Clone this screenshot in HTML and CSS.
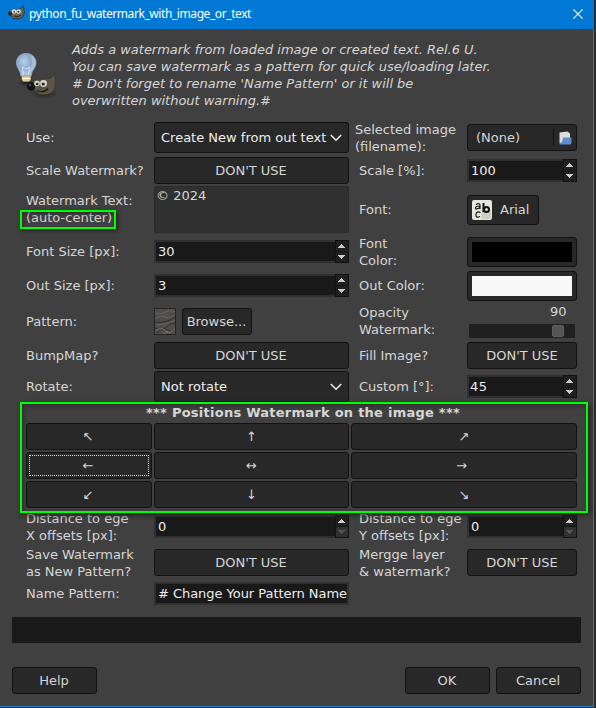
FILE: index.html
```html
<!DOCTYPE html>
<html lang="en">
<head>
<meta charset="utf-8">
<title>python_fu_watermark_with_image_or_text</title>
<link rel="stylesheet" href="styles.css">
</head>
<body>
<svg class="defs" width="0" height="0">
  <symbol id="up" viewBox="0 0 7 4"><path d="M3 0h1v1h1v1h1v1h1v1H0V3h1V2h1V1h1z"/></symbol>
  <symbol id="down" viewBox="0 0 7 4"><path d="M0 0h7v1H6v1H5v1H4v1H3V3H2V2H1V1H0z"/></symbol>
  <symbol id="chev" viewBox="0 0 12 8"><path d="M.8 1l5.2 5.2L11.2 1" fill="none" stroke="#eee" stroke-width="1.6"/></symbol>
</svg>
<div class="window">
  <header class="titlebar">
    <svg class="app-icon" viewBox="0 0 17 15">
      <path d="M5 4l3 0 4-1 3.500-3 .8 7-1.800 4-4 2.200-5-.7-2.500-3z" fill="#6b6355" stroke="#2b2926" stroke-width=".8"/>
      <ellipse cx="2" cy="7.500" rx="2" ry="1.900" fill="#252525"/>
      <circle cx="6" cy="5.500" r="2.200" fill="#eee"/><circle cx="10.500" cy="5.500" r="2.300" fill="#eee"/>
      <circle cx="6.200" cy="5.800" r=".9" fill="#222"/><circle cx="10.500" cy="5.800" r="1" fill="#222"/>
      <path d="M6 10q4 2 7-1" stroke="#222" fill="none"/>
    </svg>
    <span class="title">python_fu_watermark_with_image_or_text</span>
    <svg class="close" viewBox="0 0 10 10"><path d="M.4.4l9.2 9.2M9.6.4L.4 9.6" stroke="#fff" stroke-width="1.1"/></svg>
  </header>

  <section class="intro">
    <svg class="intro-icon" viewBox="0 0 46 50">
      <defs>
        <radialGradient id="glass" cx=".4" cy=".35"><stop offset="0" stop-color="#bcd1eb"/><stop offset=".7" stop-color="#8aa8cd"/><stop offset="1" stop-color="#a9c3de"/></radialGradient>
        <radialGradient id="shade"><stop offset="0" stop-color="#111" stop-opacity=".8"/><stop offset="1" stop-color="#222" stop-opacity="0"/></radialGradient>
      </defs>
      <ellipse cx="30" cy="40" rx="14" ry="6" fill="url(#shade)"/>
      <ellipse cx="12" cy="30" rx="9" ry="4" fill="url(#shade)"/>
      <path d="M19 27l6-1h6l6-1 4-4.500.5 9-1 7-4 4-6 1.500-5-.5-5-4z" fill="#5c5544" stroke="#3b372e" stroke-width=".8"/>
      <circle cx="17" cy="33.500" r="4.200" fill="#101114"/><circle cx="16" cy="32" r="1.200" fill="#53565d"/>
      <circle cx="23" cy="30.500" r="2.800" fill="#d8d6cf"/><circle cx="29.500" cy="30.500" r="3.400" fill="#d8d6cf"/>
      <circle cx="23.200" cy="31" r="1.300" fill="#222"/><circle cx="29.200" cy="31" r="1.600" fill="#222"/>
      <path d="M23 37.500q7 3 11-2" stroke="#1d1b18" stroke-width="1.300" fill="none"/>
      <path d="M12 .5C6 .5 2.500 4.500 2.500 10c0 5 4 7 4.500 13h10c.5-6 5-8 5-13C22 4.500 18 .5 12 .5z" fill="url(#glass)" stroke="#8ba4bd"/>
      <path d="M9.500 22l-1-8 3.500 2 3.500-2-1 8" stroke="#d3e0ec" stroke-width="1" fill="none"/>
      <path d="M8 23h8.500v4L15 28.500H9.500L8 27z" fill="#d9cf9b" stroke="#a79e72" stroke-width=".6"/><path d="M8 25.500h8.500" stroke="#fbf6d5"/>
    </svg>
    <p class="intro-text">Adds a watermark from loaded image or created text. Rel.6 U.<br>You can save watermark as a pattern for quick use/loading later.<br># Don't forget to rename 'Name Pattern' or it will be<br>overwritten without warning.#</p>
  </section>

  <main class="form">
    <div class="row row-use">
      <label class="label">Use:</label>
      <div class="main"><div class="btn select">Create New from out text<svg class="chev"><use href="#chev"/></svg></div></div>
      <label class="label side-label nudged">Selected image<br>(filename):</label>
      <div class="side"><div class="btn file"><span class="file-name">(None)</span>
        <svg class="file-icon" viewBox="0 0 13 14"><path d="M.5 1.500L8.500.5l2.500 2V12H.5z" fill="#dedede"/><path d="M0 12l3-1 1-4.500h8.500L12.500 12l-1 1.500H1z" fill="#5b8fc9"/></svg></div></div>
    </div>
    <div class="row row-scale">
      <label class="label">Scale Watermark?</label>
      <div class="main"><div class="btn wide">DON'T USE</div></div>
      <label class="label side-label">Scale [%]:</label>
      <div class="side"><div class="spin"><span class="value">100</span><span class="steps"><i><svg><use href="#up"/></svg></i><i><svg><use href="#down"/></svg></i></span></div></div>
    </div>
    <div class="row row-text">
      <label class="label raised">Watermark Text:<br><span class="marked">(auto-center)</span></label>
      <div class="main"><div class="textarea">© 2024</div></div>
      <label class="label side-label">Font:</label>
      <div class="side"><div class="btn font"><svg class="font-icon" viewBox="0 0 20 20"><rect width="20" height="20" rx="2" fill="#e6e6dc"/><path d="M9.500 10H19v9H9.500z" fill="#cfcfbd"/><g fill="none" stroke="#111"><path d="M4 4.500q4-2 4 1V9M8 6Q3.500 6 3.500 8T8 7.500" stroke-width="1.200"/><path d="M11.500 3v9" stroke-width="2"/><circle cx="14.500" cy="9.500" r="2.500" stroke-width="2"/><path d="M8.500 12.500q-4-2-4.500 2t4 2" stroke-width="1.200"/></g></svg>Arial</div></div>
    </div>
    <div class="row row-fontsize">
      <label class="label raised">Font Size [px]:</label>
      <div class="main raised"><div class="spin"><span class="value">30</span><span class="steps"><i><svg><use href="#up"/></svg></i><i><svg><use href="#down"/></svg></i></span></div></div>
      <label class="label side-label">Font<br>Color:</label>
      <div class="side"><div class="btn color"><span class="swatch black"></span></div></div>
    </div>
    <div class="row row-outsize">
      <label class="label raised">Out Size [px]:</label>
      <div class="main raised"><div class="spin"><span class="value">3</span><span class="steps"><i><svg><use href="#up"/></svg></i><i><svg><use href="#down"/></svg></i></span></div></div>
      <label class="label side-label raised">Out Color:</label>
      <div class="side"><div class="btn color"><span class="swatch white"></span></div></div>
    </div>
    <div class="row row-pattern">
      <label class="label">Pattern:</label>
      <div class="main pattern">
        <svg class="pattern-thumb" viewBox="0 0 22 27"><path fill="#504d4d" d="M0 0h22v27H0z"/><g fill="none"><path d="M0 5q6 2 11-1t11 0M0 11q7-4 11-2t11-3M3 17q10 0 19-5" stroke="#666363"/><path d="M0 14q10 2 22-5M1 20q8 3 13-2t8-1M3 25q7-6 11-3t8-1" stroke="#2f2c2c"/><path d="M2 22q7-3 10 1t10-3M9 26l5-2" stroke="#7d7673"/></g><path d="M.5.500h21v26H.5z" fill="none" stroke="#242424"/></svg>
        <div class="btn browse">Browse...</div>
      </div>
      <label class="label side-label">Opacity<br>Watermark:</label>
      <div class="side opacity"><span class="opacity-value">90</span><div class="track"><span class="thumb"></span></div></div>
    </div>
    <div class="row row-bump">
      <label class="label">BumpMap?</label>
      <div class="main"><div class="btn wide">DON'T USE</div></div>
      <label class="label side-label">Fill Image?</label>
      <div class="side"><div class="btn">DON'T USE</div></div>
    </div>
    <div class="row row-rotate">
      <label class="label">Rotate:</label>
      <div class="main"><div class="btn select">Not rotate<svg class="chev"><use href="#chev"/></svg></div></div>
      <label class="label side-label">Custom [°]:</label>
      <div class="side"><div class="spin"><span class="value tight">45</span><span class="steps"><i><svg><use href="#up"/></svg></i><i><svg><use href="#down"/></svg></i></span></div></div>
    </div>

    <section class="positions">
      <h2 class="positions-title">*** Positions Watermark on the image ***</h2>
      <div class="pad">
        <div class="btn">↖</div><div class="btn">↑</div><div class="btn">↗</div>
        <div class="btn focused">←</div><div class="btn">↔</div><div class="btn shifted">→</div>
        <div class="btn">↙</div><div class="btn">↓</div><div class="btn">↘</div>
      </div>
    </section>

    <div class="row row-distance">
      <label class="label">Distance to ege<br>X offsets [px]:</label>
      <div class="main raised"><div class="spin"><span class="value">0</span><span class="steps"><i><svg><use href="#up"/></svg></i><i class="off"><svg><use href="#down"/></svg></i></span></div></div>
      <label class="label side-label">Distance to ege<br>Y offsets [px]:</label>
      <div class="side raised"><div class="spin"><span class="value">0</span><span class="steps"><i><svg><use href="#up"/></svg></i><i class="off"><svg><use href="#down"/></svg></i></span></div></div>
    </div>
    <div class="row row-save">
      <label class="label">Save Watermark<br>as New Pattern?</label>
      <div class="main raised"><div class="btn wide">DON'T USE</div></div>
      <label class="label side-label">Mergge layer<br>&amp; watermark?</label>
      <div class="side raised"><div class="btn">DON'T USE</div></div>
    </div>
    <div class="row row-name">
      <label class="label">Name Pattern:</label>
      <div class="main"><div class="spin entry"><span class="value">#&nbsp;Change Your Pattern Name</span></div></div>
    </div>
  </main>

  <div class="progress"></div>
  <footer class="actions">
    <div class="btn">Help</div><div class="btn ok">OK</div><div class="btn">Cancel</div>
  </footer>
</div>
</body>
</html>
```
FILE: styles.css
```css
*, *::after { box-sizing: border-box; }
body {
  margin: 0;
  height: 708px;
  overflow: hidden;
  background: #2b2b2b;
  color: #d6d6d6;
  font: 13px/17px "DejaVu Sans", sans-serif;
  white-space: nowrap;
}
.defs { position: absolute; }
.window {
  width: 594px;
  height: 707px;
  background: #404040;
  border-right: 1px solid #1a80cf;
  border-bottom: 1px solid #1a80cf;
}
.titlebar {
  display: flex;
  align-items: center;
  width: 594px;
  height: 29px;
  padding: 0 11px 2px 8px;
  background: #0078d4;
  color: #fff;
  font: 12px/16px "Noto Sans", sans-serif;
}
.app-icon { width: 17px; height: 15px; margin: 0 4px 1px 0; }
.title { flex: 1; letter-spacing: -0.42px; }
.close { width: 10px; height: 10px; }

.intro { display: flex; height: 93px; padding: 12px 0 0 14px; }
.intro-icon { width: 46px; height: 50px; margin: 12px 12px 0 0; }
.intro-text { margin: 0; font-style: italic; letter-spacing: -0.02px; }

.form { padding-left: 26px; }
.row { display: flex; align-items: center; width: 551px; }
.label { width: 128px; }
.main { width: 195px; }
.side-label { width: 118px; padding-left: 10px; }
.side-label.nudged { padding-left: 6px; }
.side { width: 110px; }
.raised { padding-bottom: 1px; }
.row-use { height: 31px; }
.row-scale { height: 27px; margin-top: 4px; }
.row-text { height: 47px; margin-top: 2px; }
.row-fontsize { height: 30px; margin-top: 4px; }
.row-outsize { height: 30px; margin-top: 4px; }
.row-pattern { height: 34px; margin-top: 3px; }
.row-bump { height: 27px; margin-top: 4px; }
.row-rotate { height: 31px; margin-top: 2px; }
.row-distance { height: 34px; }
.row-save { height: 34px; margin-top: 2px; }
.row-name { height: 23px; margin-top: 2px; }

.btn {
  display: flex;
  align-items: center;
  justify-content: center;
  height: 27px;
  background: #282828;
  border: 1px solid #111;
  border-radius: 3px;
}
.wide { padding-right: 1px; }
.select { height: 31px; justify-content: space-between; padding: 0 6px; color: #eee; }
.chev { flex: none; width: 12px; height: 8px; }
.file { justify-content: space-between; padding: 0 4px 0 8px; }
.file-name { width: 78px; line-height: 17px; border-right: 1px solid #111; }
.file-icon { width: 13px; height: 14px; }
.font { width: 72px; height: 30px; justify-content: flex-start; padding-left: 4px; }
.font-icon { width: 20px; height: 20px; margin-right: 8px; }
.color { height: 30px; }
.swatch { width: 100px; height: 20px; }
.black { background: #000; }
.white { background: #f8f8f8; }

.spin {
  display: flex;
  height: 23px;
  background: #191919;
  border: 2px solid #303030;
  border-right: 0;
  color: #eee;
}
.value { flex: 1; padding-left: 2px; line-height: 19px; }
.value.tight { padding-left: 1px; letter-spacing: 0.4px; }
.steps { width: 14px; height: 23px; margin-top: -2px; border: 1px solid #111; background: #202020; }
.steps i { display: flex; align-items: center; height: 10px; padding-left: 2px; }
.steps i + i { height: 11px; border-top: 1px solid #141414; }
.steps svg { width: 7px; height: 4px; fill: #ccc; }
.steps .off { background: #303030; }
.steps .off svg { fill: #555; }
.entry { border-right: 2px solid #303030; }
.entry .value { letter-spacing: -0.04px; }
.textarea {
  height: 47px;
  padding: 0 1px;
  line-height: 18px;
  background: #303030;
  border: 1px solid #2a2a2a;
  border-radius: 2px;
}
.marked { position: relative; }
.marked::after {
  content: "";
  position: absolute;
  left: -6px;
  top: 0;
  width: 96px;
  height: 19px;
  border: 2px solid #0f0;
  box-shadow: 2px 2px 4px #222, inset 2px 2px 4px #2228;
}
.pattern { display: flex; gap: 6px; }
.pattern-thumb { width: 22px; height: 27px; }
.browse { width: 70px; padding-right: 1px; }
.opacity { height: 34px; padding: 0 2px; }
.opacity-value { display: block; padding-left: 81px; line-height: 16px; }
.track { height: 14px; margin-top: 4px; padding: 1px 11px 0 0; background: #202020; }
.thumb { display: block; width: 12px; height: 12px; margin-left: auto; background: #555; border: 1px solid #606060; border-radius: 2px; }

.positions {
  position: relative;
  width: 568px;
  height: 111px;
  margin: 0 0 -3px -6px;
  padding: 0 4px;
  border: 2px solid #0f0;
  box-shadow: 2px 2px 5px #222, inset 2px 2px 5px #2228;
}
.positions-title { margin: 0; padding: 0 2px 1px 0; font-size: 13px; line-height: 18px; letter-spacing: 0.25px; text-align: center; }
.pad { display: grid; grid-template-columns: 126px 195px 226px; gap: 2px; }
.pad .btn:first-child, .pad .btn:nth-child(4), .pad .btn:nth-child(7) { padding-right: 2px; }
.focused { outline: 1px dotted #ddd; outline-offset: -4px; }
.pad .shifted { padding-right: 5px; }

.progress { width: 569px; height: 26px; margin: 12px 0 24px 12px; background: #191919; }
.actions { display: flex; gap: 6px; width: 569px; margin-left: 12px; }
.actions .btn { width: 85px; padding-right: 1px; }
.ok { margin-left: auto; }
```
